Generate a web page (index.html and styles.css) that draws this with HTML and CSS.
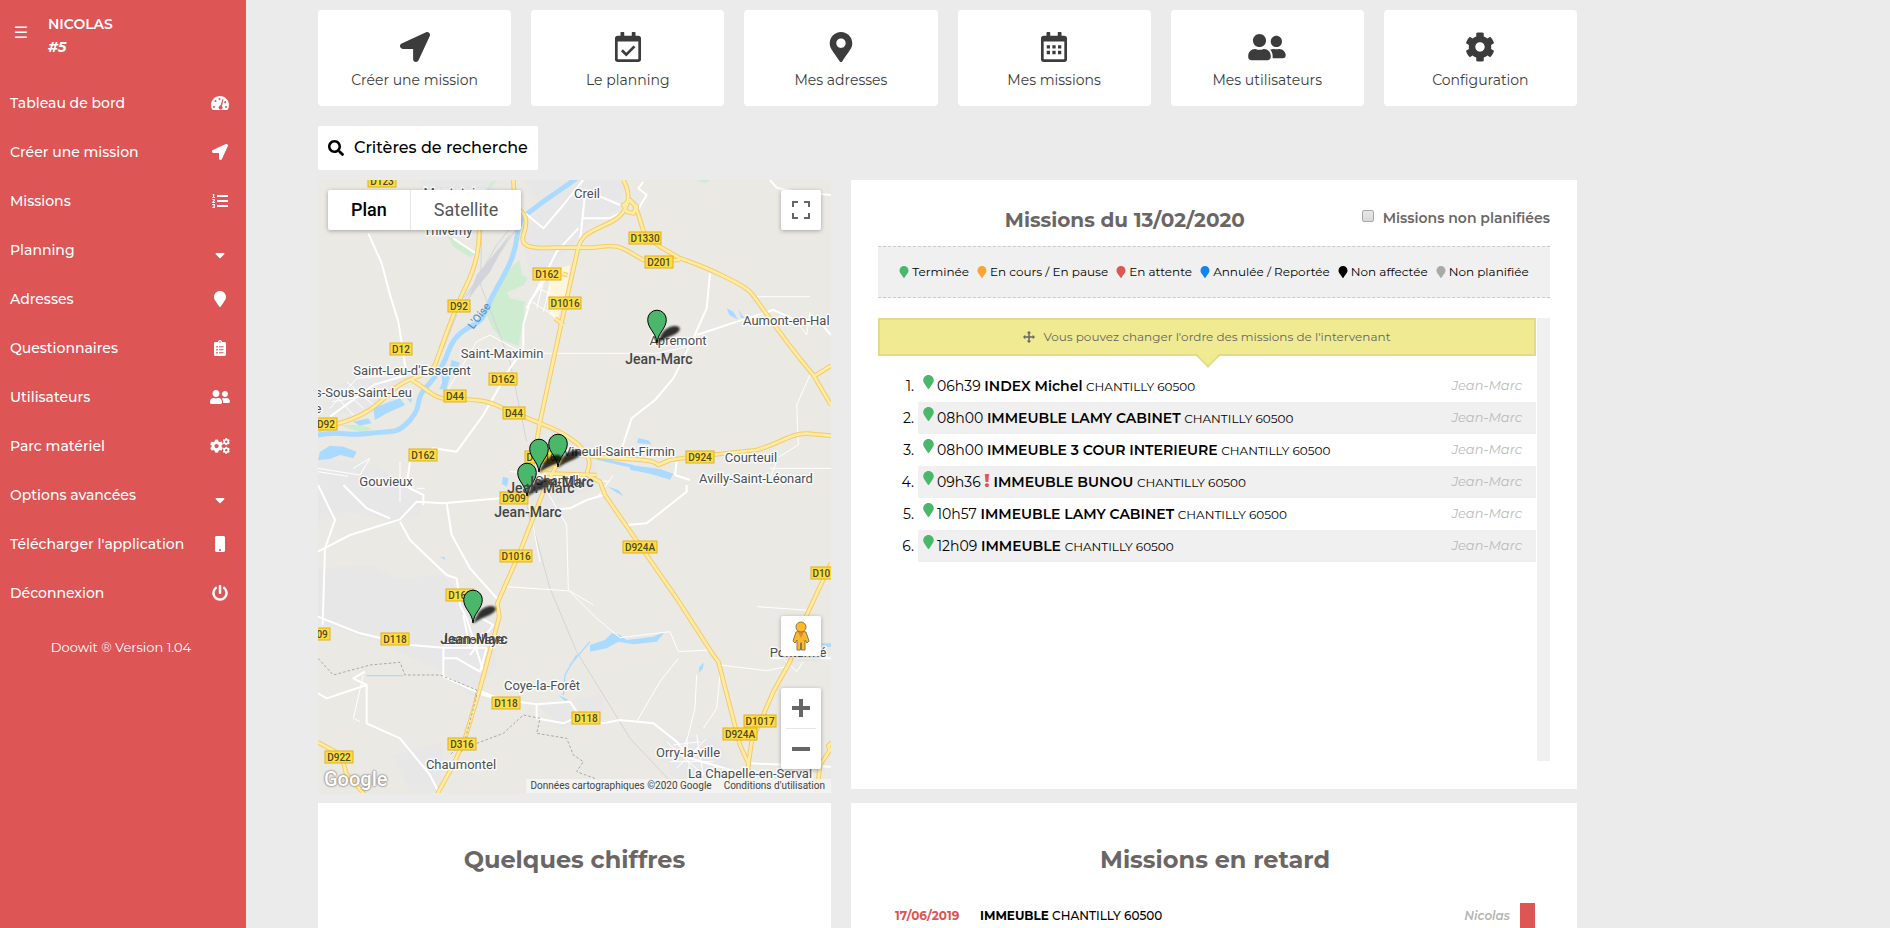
FILE: index.html
```html
<!DOCTYPE html>
<html lang="fr">
<head>
<meta charset="utf-8">
<title>Doowit - Tableau de bord</title>
<link rel="stylesheet" href="styles.css">
</head>
<body>
<svg class="sprite" aria-hidden="true">
  <symbol id="i-arrow" viewBox="0 0 512 512"><path d="M444.52 3.52L28.74 195.42c-47.97 22.39-31.98 92.75 19.19 92.75h175.91v175.91c0 51.17 70.36 67.17 92.75 19.19l191.9-415.78c15.99-38.39-25.59-79.97-63.97-63.97z"/></symbol>
  <symbol id="i-pin" viewBox="0 0 384 512"><path d="M172.268 501.67C26.97 291.031 0 269.413 0 192 0 85.961 85.961 0 192 0s192 85.961 192 192c0 77.413-26.97 99.031-172.268 309.67-9.535 13.774-29.93 13.773-39.464 0z"/></symbol>
  <symbol id="i-pin-alt" viewBox="0 0 384 512"><path d="M172.268 501.67C26.97 291.031 0 269.413 0 192 0 85.961 85.961 0 192 0s192 85.961 192 192c0 77.413-26.97 99.031-172.268 309.67-9.535 13.774-29.93 13.773-39.464 0zM192 272c44.183 0 80-35.817 80-80s-35.817-80-80-80-80 35.817-80 80 35.817 80 80 80z"/></symbol>
  <symbol id="i-sort" viewBox="0 0 320 512"><path d="M41 288h238c21.4 0 32.1 25.9 17 41L177 448c-9.4 9.4-24.6 9.4-33.9 0L24 329c-15.1-15.1-4.4-41 17-41z"/></symbol>
  <symbol id="i-users" viewBox="0 0 640 512"><path d="M192 256c61.9 0 112-50.1 112-112S253.9 32 192 32 80 82.1 80 144s50.1 112 112 112zm76.8 32h-8.3c-20.8 10-43.9 16-68.5 16s-47.6-6-68.5-16h-8.3C51.6 288 0 339.6 0 403.2V432c0 26.5 21.5 48 48 48h288c26.5 0 48-21.5 48-48v-28.8c0-63.6-51.6-115.2-115.2-115.2zM480 256c53 0 96-43 96-96s-43-96-96-96-96 43-96 96 43 96 96 96zm48 32h-3.8c-13.9 4.8-28.6 8-44.2 8s-30.3-3.2-44.2-8H432c-20.4 0-39.2 5.9-55.7 15.4 24.4 26.3 39.7 61.2 39.7 99.8v38.4c0 2.2-.5 4.3-.6 6.4H592c26.5 0 48-21.5 48-48 0-61.9-50.1-112-112-112z"/></symbol>
  <symbol id="i-cog" viewBox="0 0 512 512"><path d="M487.4 315.7l-42.6-24.6c4.3-23.2 4.3-47 0-70.2l42.6-24.6c4.9-2.8 7.1-8.6 5.5-14-11.1-35.6-30-67.8-54.7-94.6-3.8-4.1-10-5.1-14.8-2.3L380.8 110c-17.9-15.4-38.5-27.3-60.8-35.1V25.8c0-5.6-3.9-10.5-9.4-11.7-36.7-8.2-74.3-7.8-109.2 0-5.5 1.2-9.4 6.1-9.4 11.7V75c-22.2 7.9-42.8 19.8-60.8 35.1L88.7 85.5c-4.9-2.8-11-1.9-14.8 2.3-24.7 26.7-43.6 58.9-54.7 94.6-1.7 5.4.6 11.2 5.5 14L67.3 221c-4.3 23.2-4.3 47 0 70.2l-42.6 24.6c-4.9 2.8-7.1 8.6-5.5 14 11.1 35.6 30 67.8 54.7 94.6 3.8 4.1 10 5.1 14.8 2.3l42.6-24.6c17.9 15.4 38.5 27.3 60.8 35.1v49.2c0 5.6 3.9 10.5 9.4 11.7 36.7 8.2 74.3 7.8 109.2 0 5.5-1.2 9.4-6.1 9.4-11.7v-49.2c22.2-7.9 42.8-19.8 60.8-35.1l42.6 24.6c4.9 2.8 11 1.9 14.8-2.3 24.7-26.7 43.6-58.9 54.7-94.6 1.5-5.5-.7-11.3-5.6-14.1zM256 336c-44.1 0-80-35.9-80-80s35.9-80 80-80 80 35.9 80 80-35.9 80-80 80z"/></symbol>
  <symbol id="i-cogs" viewBox="0 0 640 512"><use href="#i-cog" x="-8" y="40" width="436" height="436"/><use href="#i-cog" x="400" y="0" width="240" height="240"/><use href="#i-cog" x="400" y="272" width="240" height="240"/></symbol>
  <symbol id="i-search" viewBox="0 0 512 512"><path d="M505 442.7L405.3 343c-4.5-4.5-10.6-7-17-7H372c27.6-35.3 44-79.7 44-128C416 93.1 322.9 0 208 0S0 93.1 0 208s93.1 208 208 208c48.3 0 92.7-16.4 128-44v16.3c0 6.4 2.5 12.5 7 17l99.7 99.7c9.4 9.4 24.6 9.4 33.9 0l28.3-28.3c9.4-9.4 9.4-24.6.1-34zM208 336c-70.7 0-128-57.2-128-128 0-70.7 57.2-128 128-128 70.7 0 128 57.2 128 128 0 70.7-57.2 128-128 128z"/></symbol>
  <symbol id="i-power" viewBox="0 0 512 512"><path d="M400 54.1c63 45 104 118.6 104 201.9 0 136.8-110.8 247.7-247.5 248C120 504.3 8.2 393 8 256.4 7.9 173.1 48.9 99.3 111.8 54.2c11.7-8.3 28-4.8 35 7.7L162.6 90c5.9 10.5 3.1 23.8-6.6 31-41.5 30.8-68 79.6-68 134.9-.1 92.3 74.5 168.1 168 168.1 91.6 0 168.6-74.2 168-169.1-.3-51.8-24.7-101.8-68.1-134-9.7-7.2-12.4-20.5-6.5-30.9l15.8-28.1c7-12.4 23.2-16.1 34.8-7.8zM296 264V24c0-13.3-10.7-24-24-24h-32c-13.3 0-24 10.7-24 24v240c0 13.3 10.7 24 24 24h32c13.3 0 24-10.7 24-24z"/></symbol>
  <symbol id="i-mobile" viewBox="0 0 320 512"><path d="M272 0H48C21.5 0 0 21.5 0 48v416c0 26.5 21.5 48 48 48h224c26.5 0 48-21.5 48-48V48c0-26.5-21.5-48-48-48zM160 480c-17.7 0-32-14.3-32-32s14.3-32 32-32 32 14.3 32 32-14.3 32-32 32z"/></symbol>
  <symbol id="i-gauge" viewBox="0 0 576 512"><path fill-rule="evenodd" d="M288 32C129 32 0 161 0 320c0 53 14 102 39 145 6 9 16 15 27 15h444c11 0 21-6 27-15 25-43 39-92 39-145C576 161 447 32 288 32zM96 352a32 32 0 1 1 0 64 32 32 0 0 1 0-64zM144 160a32 32 0 1 1 0 64 32 32 0 0 1 0-64zM272 96a32 32 0 1 1 0 64 32 32 0 0 1 0-64zM372 122l28 10-50 222a64 64 0 1 1-46-16zM440 200a32 32 0 1 1 0 60 32 32 0 0 1 0-60zM480 352a32 32 0 1 1 0 64 32 32 0 0 1 0-64z"/></symbol>
  <symbol id="i-list" viewBox="0 0 512 512"><path d="M176 64h320a16 16 0 0 1 16 16v32a16 16 0 0 1-16 16H176a16 16 0 0 1-16-16V80a16 16 0 0 1 16-16zM176 224h320a16 16 0 0 1 16 16v32a16 16 0 0 1-16 16H176a16 16 0 0 1-16-16v-32a16 16 0 0 1 16-16zM176 384h320a16 16 0 0 1 16 16v32a16 16 0 0 1-16 16H176a16 16 0 0 1-16-16v-32a16 16 0 0 1 16-16zM24 32h48v96h24v32H8v-32h24V64H16zM8 192h84v58l-40 38h44v32H4v-36l52-48v-14H8zM8 352h86v44l-18 20 18 20v44H8v-30h50v-20H28v-26h30v-22H8z"/></symbol>
  <symbol id="i-clipboard" viewBox="0 0 384 512"><path fill-rule="evenodd" d="M336 64h-80c0-35-29-64-64-64s-64 29-64 64H48C22 64 0 86 0 112v352c0 26 22 48 48 48h288c26 0 48-22 48-48V112c0-26-22-48-48-48zM192 40a24 24 0 1 1 0 48 24 24 0 0 1 0-48zM72 192h48v48H72zM160 200h144v32H160zM72 288h48v48H72zM160 296h144v32H160zM72 384h48v48H72zM160 392h144v32H160z"/></symbol>
  <symbol id="i-cal" viewBox="0 0 448 512"><path d="M400 64h-48V12c0-6.600-5.400-12-12-12h-40c-6.600 0-12 5.400-12 12v52H160V12c0-6.600-5.400-12-12-12h-40c-6.600 0-12 5.400-12 12v52H48C21.500 64 0 85.500 0 112v352c0 26.500 21.500 48 48 48h352c26.500 0 48-21.500 48-48V112c0-26.500-21.500-48-48-48zm-6 400H54c-3.300 0-6-2.700-6-6V160h352v298c0 3.300-2.700 6-6 6z"/></symbol>
  <symbol id="i-move" viewBox="0 0 512 512"><path d="M256 0l96 96h-64v128h128v-64l96 96-96 96v-64H288v128h64l-96 96-96-96h64V288H96v64L0 256l96-96v64h128V96h-64z"/></symbol>
  <symbol id="m-pin" viewBox="-12 -36 40 40" overflow="visible"><path class="pin-shadow" d="M0 0C3-7 5-13 11-16c8-4 14-1 11 3C18-8 8-7 0 0z"/><path class="pin-body" d="M0-1C-1-12-9.300-15-9.300-24.500a9.300 9.300 0 0 1 18.600 0C9.300-15 1-12 0-1z"/></symbol>
</svg>

<div class="app">
  <aside class="sidebar">
    <header class="user">
      <button class="burger" type="button" aria-label="Menu">☰</button>
      <div><strong class="user-name">NICOLAS</strong><em class="user-id">#5</em></div>
    </header>
    <nav class="menu">
      <a href="#">Tableau de bord<span class="ic"><svg class="w18"><use href="#i-gauge"/></svg></span></a>
      <a href="#">Créer une mission<span class="ic"><svg><use href="#i-arrow"/></svg></span></a>
      <a href="#">Missions<span class="ic"><svg><use href="#i-list"/></svg></span></a>
      <a href="#">Planning<span class="ic sort"><svg><use href="#i-sort"/></svg></span></a>
      <a href="#">Adresses<span class="ic"><svg><use href="#i-pin"/></svg></span></a>
      <a href="#">Questionnaires<span class="ic"><svg><use href="#i-clipboard"/></svg></span></a>
      <a href="#">Utilisateurs<span class="ic"><svg class="w20"><use href="#i-users"/></svg></span></a>
      <a href="#">Parc matériel<span class="ic"><svg class="w20"><use href="#i-cogs"/></svg></span></a>
      <a href="#">Options avancées<span class="ic sort"><svg><use href="#i-sort"/></svg></span></a>
      <a href="#">Télécharger l'application<span class="ic"><svg><use href="#i-mobile"/></svg></span></a>
      <a href="#">Déconnexion<span class="ic"><svg><use href="#i-power"/></svg></span></a>
    </nav>
    <p class="version">Doowit ® Version 1.04</p>
  </aside>

  <main class="content">
    <nav class="tiles">
      <a class="tile" href="#"><svg><use href="#i-arrow"/></svg>Créer une mission</a>
      <a class="tile" href="#"><svg viewBox="0 0 448 512"><use href="#i-cal"/><path class="check" d="M120 312l74 74 140-140"/></svg>Le planning</a>
      <a class="tile" href="#"><svg><use href="#i-pin-alt"/></svg>Mes adresses</a>
      <a class="tile" href="#"><svg viewBox="0 0 448 512"><use href="#i-cal"/><path d="M100 226h56v56h-56zM196 226h56v56h-56zM292 226h56v56h-56zM100 322h56v56h-56zM196 322h56v56h-56zM292 322h56v56h-56z"/></svg>Mes missions</a>
      <a class="tile" href="#"><svg class="wide"><use href="#i-users"/></svg>Mes utilisateurs</a>
      <a class="tile" href="#"><svg><use href="#i-cog"/></svg>Configuration</a>
    </nav>

    <button class="criteria" type="button"><svg><use href="#i-search"/></svg>Critères de recherche</button>

    <div class="board">
      <section class="map" aria-label="Carte">
        <svg class="map-canvas" viewBox="0 0 513 613" preserveAspectRatio="xMidYMid slice">
          <g transform="translate(-8 -5) scale(.33333)">
            <g class="urban">
              <path d="M640 15H950L930 100 830 150 780 220 700 290 660 300 640 200 690 90z"/>
              <path d="M24 1180L180 1170 260 1210 400 1200 470 1270 560 1330 560 1480 480 1560 400 1490 200 1400 24 1340z"/>
              <path d="M24 850L200 870 270 930 340 960 330 1020 250 1040 120 1010 24 1040z"/>
              <path d="M60 640L180 590 300 600 230 700 60 720z"/>
              <path d="M330 15H560L520 160 400 190 330 100z"/>
              <path d="M690 790L850 800 860 930 720 1000 640 960z"/>
              <path d="M1060 1680L1220 1690 1280 1800 1200 1850 1080 1800z"/>
              <path d="M680 1590L880 1560 880 1640 760 1660z"/>
              <path d="M250 1740L400 1700 390 1850 300 1850z"/>
            </g>
            <path class="commerce" d="M720 290L780 270 770 350 740 440 710 400z"/>
            <g class="green">
              <path d="M628 255L636 300 652 308 642 330 590 352 600 370 645 380 640 440 625 512 580 495 548 460 530 420 550 360 580 300z"/>
              <path d="M412 182L500 235 480 246 430 215zM90 750L150 750 185 760 160 775zM540 40L560 15 545 20 530 45zM1160 15h40l-15 10z"/>
            </g>
            <g class="rail">
              <path d="M470 380L620 160M450 400L560 210 640 110M460 370L600 180M515 160L512 330 600 560 650 800M660 1020L720 1240 800 1430 880 1560 960 1690 1110 1850M640 930L660 1040M400 520L440 420"/>
              <path class="yard" d="M475 370L500 300 600 180 540 290z"/>
            </g>
            <g class="river">
              <path d="M800 10C760 40 710 70 680 95S630 120 622 180 600 270 560 340 530 430 490 450 430 490 415 530 390 590 350 635 340 690 300 735 250 765 180 775 90 765 24 780"/>
            </g>
            <g class="water">
              <path d="M190 700L240 680 270 670 285 690 230 715 195 735zM290 670l18-5-5 18zM130 740L175 730 185 745 150 752zM30 830L60 812 100 815 140 830 130 850 90 840 60 852 24 855zM395 590l15-12 10 25-10 40-22 0 8-20zM425 555l25 8-10 20-20-5zM578 905l18 5-5 25-15-8zM390 1145l14 2 2 8zM1250 400l20 10 14 24-26-14zM1285 402l12 20 10 8-14-2zM960 870l90 12 40 14-10 18-60-18-60-12zM860 845l110 25 0 10-110-26zM985 790l30 6 10 12-44-4z"/>
              <path d="M840 1410L885 1395 905 1375 930 1380 950 1395 1030 1385 1065 1370 1040 1400 970 1408 925 1400 890 1420 840 1430zM1168 1475l14-12-4 18-12 12zM745 1560l30 14-10 4zM1535 1405l28 0 0 10-24 2zM895 935l30 10 15 18-20-10z"/>
              <path class="stream" d="M170 1502h110M800 1440l-35 60-5 60M780 1470l60-70M24 1508"/>
            </g>
            <g class="minor">
              <path d="M60 700L140 610 250 600M75 660L130 720M95 640L160 700M110 620L190 690M65 680l130-20M24 880L150 900 180 850 130 880"/>
              <path d="M270 860v120M24 890l90 14M780 535H640L540 480 500 500 410 650M345 940H320"/>
              <path d="M680 340L760 370M665 380L745 430M700 320L680 400M720 330L700 410M740 360L720 420"/>
              <path d="M780 535H1040L1180 505M1500 600L1460 690 1465 810 1400 850M1340 365H1500M1340 1295L1500 1306M700 930L770 1050 775 1245M590 1235L780 1248 850 1290M650 950l40 210"/>
              <path d="M780 1250L860 1330 930 1388 1080 1370 1105 1430 1200 1425M1105 1450L1050 1520 980 1640M1230 1470L1370 1487 1430 1475M1230 1500L1220 1600 1180 1660M1160 1500l-5 100-20 80-20 60"/>
              <path d="M1070 1700L1180 1800M1080 1740L1200 1720M1100 1780L1190 1690M1130 1690l10 110M1160 1680l20 120M1090 1710l80-10M1080 1760l130 0M1380 880h200M1400 860l-20 50M1420 1450l40 40 20-30M160 1500l-30 130 20 10M690 900L900 920M860 970l50-70M600 890L820 900M1460 440L1490 480 1500 410"/>
            </g>
            <g class="minor bold">
              <path d="M175 175L215 265 240 360 265 440 290 600M430 190L497 235"/>
              <path d="M820 15L760 90 700 160 640 110M720 290L660 380 640 450 640 520 600 580 520 720 440 830 370 820 300 860 290 930"/>
              <path d="M290 600L190 630 60 725M805 160L740 230 710 290 650 400"/>
              <path d="M1380 15L1400 38 1460 50 1563 60M860 60L930 90M820 130L900 130 940 110M810 200L825 60M980 110L1010 60 985 40 1000 20"/>
              <path d="M1200 295L1190 400 1150 490 1090 610 1035 675 965 730 935 820M1160 480L1290 437 1390 405 1470 440 1520 430 1563 480"/>
              <path d="M24 1130L120 1080 270 1033 320 980 400 985 570 970 650 965M270 1040L300 1095 410 1200 440 1210 450 1290 470 1330 520 1490"/>
              <path d="M24 930L75 1035 45 1120 38 1350M410 985L425 1080 480 1180 565 1275M24 1325L150 1375 300 1410 400 1418 530 1418M400 1418V1505L520 1560 580 1575"/>
              <path d="M400 1450L440 1450 510 1490 530 1420M460 1320L480 1420M480 1310L550 1350 480 1440M24 1555L50 1570 170 1530V1645L270 1690 360 1800 385 1850M170 1530l-40-20 35-20"/>
              <path d="M100 930L170 1000 240 1030M280 930L340 960V990M650 1010L780 1000 830 975 880 960M950 1050L1010 1045 1130 950 1130 930"/>
              <path d="M500 1545L580 1575 680 1588 780 1580 810 1625 880 1645 930 1635 1030 1645 1100 1700 1140 1750 1280 1790M680 1590V1630L760 1645 840 1610M1320 1765L1563 1775M1380 1450H1563M1100 860L1095 900 1140 915"/>
            </g>
            <path class="border" d="M24 1450L70 1500 180 1470 270 1462 285 1500 390 1500 500 1545 480 1640 460 1700 420 1740M500 1705L580 1675 640 1620 690 1630 680 1675 770 1690 790 1740 820 1760 800 1790 880 1820"/>
            <g class="road-edge">
              <path id="r1" d="M507 165C510 220 495 280 465 340S400 500 375 570C350 610 300 600 255 640S180 720 80 747L24 765"/>
              <path id="r2" d="M610 15L615 100C650 110 655 140 640 180 630 215 660 222 740 218H850C930 205 930 215 1000 255L1110 255"/>
              <path id="r3" d="M940 15C965 60 960 110 905 140S815 170 803 225L755 440 690 740 670 860 645 940"/>
              <path id="r4" d="M955 75C985 90 985 130 1005 180L1050 215 1110 250C1200 280 1300 330 1320 350S1400 470 1510 600L1563 690M1510 605L1563 572"/>
              <path id="r5" d="M300 612C350 640 370 670 410 672S500 670 540 683L690 745C760 770 820 810 835 850S800 890 870 920L885 960 1100 1270 1210 1440 1225 1460 1290 1710 1315 1765V1860"/>
              <path id="r6" d="M690 890L800 840 930 850C1000 855 1030 855 1045 870L1080 855C1150 845 1250 835 1340 825 1400 810 1440 775 1490 776L1563 782"/>
              <path id="r7" d="M760 830L700 950 630 1130 562 1285 568 1325 510 1540 465 1690 430 1770 380 1860"/>
              <path id="r8" d="M1563 1165L1490 1320 1440 1460 1390 1550 1325 1700 1315 1770"/>
              <path id="r9" d="M24 1702L95 1740 108 1795 165 1860M1570 1700L1555 1712 1560 1725 1530 1770 1520 1860M700 895L860 900"/>
              <path id="r10" d="M735 430l25 20M940 90l20-15 20 20-10 20-20-5zM758 296l15 5"/>
            </g>
            <g class="road-fill">
              <use href="#r1"/><use href="#r2"/><use href="#r3"/><use href="#r4"/><use href="#r5"/><use href="#r6"/><use href="#r7"/><use href="#r8"/><use href="#r9"/><use href="#r10"/>
            </g>
            <path class="border" d="M500 1560L480 1640 455 1730"/>
          </g>

          <g class="badge">
            <g transform="translate(64 1)"><rect x="-14" y="-6" width="28" height="12"/><text y="4">D123</text></g>
            <g transform="translate(229 94)"><rect x="-14" y="-6" width="28" height="12"/><text y="4">D162</text></g>
            <g transform="translate(141 126)"><rect x="-11" y="-6" width="22" height="12"/><text y="4">D92</text></g>
            <g transform="translate(247 123)"><rect x="-16" y="-6" width="32" height="12"/><text y="4">D1016</text></g>
            <g transform="translate(83 169)"><rect x="-11" y="-6" width="22" height="12"/><text y="4">D12</text></g>
            <g transform="translate(185 199)"><rect x="-14" y="-6" width="28" height="12"/><text y="4">D162</text></g>
            <g transform="translate(137 216)"><rect x="-11" y="-6" width="22" height="12"/><text y="4">D44</text></g>
            <g transform="translate(196 233)"><rect x="-11" y="-6" width="22" height="12"/><text y="4">D44</text></g>
            <g transform="translate(8 244)"><rect x="-11" y="-6" width="22" height="12"/><text y="4">D92</text></g>
            <g transform="translate(105 275)"><rect x="-14" y="-6" width="28" height="12"/><text y="4">D162</text></g>
            <g transform="translate(223 277)"><rect x="-16" y="-6" width="32" height="12"/><text y="4">D1016</text></g>
            <g transform="translate(327 58)"><rect x="-16" y="-6" width="32" height="12"/><text y="4">D1330</text></g>
            <g transform="translate(341 82)"><rect x="-14" y="-6" width="28" height="12"/><text y="4">D201</text></g>
            <g transform="translate(382 277)"><rect x="-14" y="-6" width="28" height="12"/><text y="4">D924</text></g>
            <g transform="translate(196 318)"><rect x="-14" y="-6" width="28" height="12"/><text y="4">D909</text></g>
            <g transform="translate(198 376)"><rect x="-16" y="-6" width="32" height="12"/><text y="4">D1016</text></g>
            <g transform="translate(142 415)"><rect x="-14" y="-6" width="28" height="12"/><text y="4">D162</text></g>
            <g transform="translate(77 459)"><rect x="-14" y="-6" width="28" height="12"/><text y="4">D118</text></g>
            <g transform="translate(-2 454)"><rect x="-14" y="-6" width="28" height="12"/><text y="4">D909</text></g>
            <g transform="translate(188 523)"><rect x="-14" y="-6" width="28" height="12"/><text y="4">D118</text></g>
            <g transform="translate(268 538)"><rect x="-14" y="-6" width="28" height="12"/><text y="4">D118</text></g>
            <g transform="translate(144 564)"><rect x="-14" y="-6" width="28" height="12"/><text y="4">D316</text></g>
            <g transform="translate(21 577)"><rect x="-14" y="-6" width="28" height="12"/><text y="4">D922</text></g>
            <g transform="translate(322 367)"><rect x="-17" y="-6" width="34" height="12"/><text y="4">D924A</text></g>
            <g transform="translate(509 393)"><rect x="-16" y="-6" width="32" height="12"/><text y="4">D1017</text></g>
            <g transform="translate(442 541)"><rect x="-16" y="-6" width="32" height="12"/><text y="4">D1017</text></g>
            <g transform="translate(422 554)"><rect x="-17" y="-6" width="34" height="12"/><text y="4">D924A</text></g>
          </g>

          <g class="town">
            <text x="269" y="18">Creil</text>
            <text x="137" y="17">Montataire</text>
            <text x="130" y="55">Thiverny</text>
            <text x="184" y="178">Saint-Maximin</text>
            <text x="94" y="195">Saint-Leu-d'Esserent</text>
            <text class="end" x="94" y="217">s-Sous-Saint-Leu</text>
            <text x="0" y="233">e</text>
            <text x="68" y="306">Gouvieux</text>
            <text x="360" y="165">Apremont</text>
            <text class="start" x="425" y="145">Aumont-en-Hal</text>
            <text class="end" x="357" y="276">Vineuil-Saint-Firmin</text>
            <text x="433" y="282">Courteuil</text>
            <text x="438" y="303">Avilly-Saint-Léonard</text>
            <text x="242" y="305">Chantilly</text>
            <text x="156" y="464">Lamorlaye</text>
            <text x="224" y="510">Coye-la-Forêt</text>
            <text x="143" y="589">Chaumontel</text>
            <text x="370" y="577">Orry-la-ville</text>
            <text x="432" y="598">La Chapelle-en-Serval</text>
            <text x="480" y="477">Pontarmé</text>
            <text class="stream-name" transform="translate(164 138) rotate(-52)">L'Oise</text>
          </g>

          <g>
            <use href="#m-pin" x="327" y="128" width="40" height="40"/>
            <use href="#m-pin" x="228" y="252" width="40" height="40"/>
            <use href="#m-pin" x="209" y="257" width="40" height="40"/>
            <use href="#m-pin" x="197" y="281" width="40" height="40"/>
            <use href="#m-pin" x="143" y="408" width="40" height="40"/>
          </g>
          <g class="agent">
            <text x="341" y="184">Jean-Marc</text>
            <text x="242" y="307">Jean-Marc</text>
            <text x="223" y="313">Jean-Marc</text>
            <text x="210" y="337">Jean-Marc</text>
            <text x="156" y="464">Jean-Marc</text>
          </g>
        </svg>

        <div class="map-type"><button class="on" type="button">Plan</button><button type="button">Satellite</button></div>
        <button class="map-btn full" type="button" aria-label="Plein écran"><svg viewBox="0 0 18 18"><path d="M0 0h6v2H2v4H0zM12 0h6v6h-2V2h-4zM0 12h2v4h4v2H0zM16 12h2v6h-6v-2h4z"/></svg></button>
        <button class="map-btn pegman" type="button" aria-label="Street View"><svg viewBox="0 0 18 30"><path class="peg" d="M4 11q5-2 10 0l3 9-2 2-2-3v10H9.500v-7h-1v7H5V19l-2 3-2-2z"/><path class="peg-v" d="M6 11h6l-3 6z"/><circle class="peg" cx="9" cy="6" r="5"/></svg></button>
        <div class="map-zoom"><button type="button" aria-label="Zoom avant"><svg viewBox="0 0 18 18"><path d="M7 0h4v7h7v4h-7v7H7v-7H0V7h7z"/></svg></button><button type="button" aria-label="Zoom arrière"><svg viewBox="0 0 18 18"><path d="M0 7h18v4H0z"/></svg></button></div>
        <span class="google">Google</span>
        <div class="credits"><span>Données cartographiques ©2020 Google</span><a href="#">Conditions d'utilisation</a></div>
      </section>

      <section class="panel missions">
        <header class="missions-head">
          <h2>Missions du 13/02/2020</h2>
          <label class="unplanned" for="unplanned"><input id="unplanned" type="checkbox">Missions non planifiées</label>
        </header>
        <ul class="legend">
          <li><svg class="c-green"><use href="#i-pin"/></svg>Terminée</li>
          <li><svg class="c-orange"><use href="#i-pin"/></svg>En cours / En pause</li>
          <li><svg class="c-red"><use href="#i-pin"/></svg>En attente</li>
          <li><svg class="c-blue"><use href="#i-pin"/></svg>Annulée / Reportée</li>
          <li><svg class="c-black"><use href="#i-pin"/></svg>Non affectée</li>
          <li><svg class="c-grey"><use href="#i-pin"/></svg>Non planifiée</li>
        </ul>
        <div class="scroller">
          <div class="scroll-body">
            <p class="hint"><svg><use href="#i-move"/></svg>Vous pouvez changer l'ordre des missions de l'intervenant</p>
            <ol class="list">
              <li><span class="num">1.</span><div class="row"><svg><use href="#i-pin"/></svg><span class="what">06h39 <b>INDEX Michel</b> <small>CHANTILLY 60500</small></span><em>Jean-Marc</em></div></li>
              <li><span class="num">2.</span><div class="row"><svg><use href="#i-pin"/></svg><span class="what">08h00 <b>IMMEUBLE LAMY CABINET</b> <small>CHANTILLY 60500</small></span><em>Jean-Marc</em></div></li>
              <li><span class="num">3.</span><div class="row"><svg><use href="#i-pin"/></svg><span class="what">08h00 <b>IMMEUBLE 3 COUR INTERIEURE</b> <small>CHANTILLY 60500</small></span><em>Jean-Marc</em></div></li>
              <li><span class="num">4.</span><div class="row"><svg><use href="#i-pin"/></svg><span class="what">09h36 <b class="alert">!</b> <b>IMMEUBLE BUNOU</b> <small>CHANTILLY 60500</small></span><em>Jean-Marc</em></div></li>
              <li><span class="num">5.</span><div class="row"><svg><use href="#i-pin"/></svg><span class="what">10h57 <b>IMMEUBLE LAMY CABINET</b> <small>CHANTILLY 60500</small></span><em>Jean-Marc</em></div></li>
              <li><span class="num">6.</span><div class="row"><svg><use href="#i-pin"/></svg><span class="what">12h09 <b>IMMEUBLE</b> <small>CHANTILLY 60500</small></span><em>Jean-Marc</em></div></li>
            </ol>
          </div>
          <div class="track"></div>
        </div>
      </section>
    </div>

    <div class="board lower">
      <section class="panel stats"><h2>Quelques chiffres</h2></section>
      <section class="panel late">
        <h2>Missions en retard</h2>
        <a class="late-row" href="#"><time datetime="2019-06-17">17/06/2019</time><span class="late-what"><b>IMMEUBLE</b> CHANTILLY 60500</span><em>Nicolas</em><i class="bar"></i></a>
      </section>
    </div>
  </main>
</div>
</body>
</html>
```

FILE: styles.css
```css
* { box-sizing: border-box; }
body { margin: 0; background: #ebebeb; color: #000; font: 14px/20px Montserrat, Inter, sans-serif; }
h2, p, ul, ol { margin: 0; padding: 0; font-weight: inherit; }
ul, ol { list-style: none; }
a { color: inherit; text-decoration: none; }
button { font: inherit; border: 0; cursor: pointer; }
svg { display: block; fill: currentColor; flex: none; }
.sprite { position: absolute; width: 0; height: 0; }

.app { display: flex; height: 100vh; overflow: hidden; }

/* Sidebar */
.sidebar { flex: 0 0 246px; background: #dd5555; color: #fff; }
.user { display: flex; align-items: flex-start; gap: 18px; padding: 12px 12px 0; height: 78px; font-weight: 600; }
.burger { width: 18px; height: 42px; padding: 0; background: none; color: #fff; font-family: "DejaVu Sans", sans-serif; font-size: 16px; text-align: center; }
.user-name, .user-id { display: block; line-height: 24px; font-weight: 600; }
.user-id { line-height: 22px; font-weight: 700; }
.menu a { display: flex; align-items: center; justify-content: space-between; height: 49px; padding: 0 16px 0 10px; font-weight: 500; }
.ic { display: flex; justify-content: center; width: 20px; }
.ic svg { width: 16px; height: 16px; }
.ic .w18 { width: 18px; }
.ic .w20 { width: 20px; }
.sort { padding-top: 5px; }
.version { padding: 20px 4px 0 0; text-align: center; font-size: 13px; }

/* Main column */
.content { flex: 1; display: flex; flex-direction: column; align-items: flex-start; max-width: 1331px; padding: 10px 0 0 72px; }
.content > * { flex-shrink: 0; }
.tiles { display: grid; grid-template-columns: repeat(6, 1fr); gap: 20px; width: 100%; }
.tile { display: flex; flex-direction: column; align-items: center; gap: 7px; height: 96px; padding-top: 22px; border-radius: 4px; background: #fff; color: #3c3c3c; line-height: 22px; }
.tile svg { width: 30px; height: 30px; }
.tile .wide { width: 38px; }
.check { fill: none; stroke: currentColor; stroke-width: 46px; }
.criteria { display: flex; align-items: center; gap: 10px; height: 44px; margin: 20px 0 10px; padding: 0 10px; border-radius: 2px; background: #fff; color: #000; font-size: 16px; font-weight: 500; }
.criteria svg { width: 16px; height: 16px; }
.board { display: grid; grid-template-columns: 513fr 726fr; gap: 20px; width: 100%; align-items: start; }
.lower { flex: 1; align-items: stretch; margin-top: 10px; }
.panel { background: #fff; }

/* Map */
.map { position: relative; height: 613px; overflow: hidden; background: #eae9e4; font-family: Roboto, sans-serif; }
.map-canvas { width: 100%; height: 100%; }
.map-canvas path { fill: none; }
.map-canvas .urban path { fill: #e7e7e7; }
.map-canvas .commerce { fill: #fdf6dd; }
.map-canvas .green path { fill: #cdecd0; }
.map-canvas .water path { fill: #aadaff; }
.map-canvas .water .stream { fill: none; stroke: #aadaff; stroke-width: 4px; }
.river path { stroke: #aadaff; stroke-width: 15px; }
.rail path { stroke: #d2d4d9; stroke-width: 3px; }
.map-canvas .rail .yard { fill: #d2d4d9; stroke: none; }
.minor path { stroke: #fff; stroke-width: 3px; stroke-linejoin: round; }
.minor.bold path { stroke-width: 6px; }
.map-canvas .border { stroke: #a9a9a9; stroke-width: 3px; stroke-dasharray: 8 6; }
.road-edge { stroke: #f3cb6b; stroke-width: 14px; stroke-linejoin: round; }
.road-fill { stroke: #ffeba1; stroke-width: 8px; stroke-linejoin: round; }
.road-fill use { stroke: #ffeba1; }
.badge rect { fill: #ffdd3c; stroke: #dfae25; stroke-width: 1px; }
.badge text { font-size: 10px; font-weight: 500; fill: #4b4a2e; text-anchor: middle; }
.town text { font-size: 13px; fill: #4b5056; stroke: #fff; stroke-width: 3px; stroke-linejoin: round; stroke-opacity: .8; paint-order: stroke; text-anchor: middle; }
.town .start { text-anchor: start; }
.town .end { text-anchor: end; }
.town .stream-name { font-size: 11px; fill: #4c83c3; stroke: none; }
.agent text { font-size: 14px; font-weight: 500; fill: #444; text-anchor: middle; }
.pin-body { fill: #4bb76a; stroke: #000; stroke-width: 1px; }
.pin-shadow { fill: #000; opacity: .8; filter: blur(1px); }
.map-canvas .pin-body, .pin-body { fill: #4bb76a; }

.map-type { position: absolute; top: 10px; left: 10px; display: flex; height: 40px; background: #fff; border-radius: 2px; box-shadow: 0 1px 4px rgba(0, 0, 0, .3); font-size: 18px; }
.map-type button { padding: 0 23px; background: none; color: #565656; }
.map-type .on { color: #000; font-weight: 500; border-right: 1px solid #e6e6e6; }
.map-btn, .map-zoom { position: absolute; right: 10px; width: 40px; background: #fff; border-radius: 2px; box-shadow: 0 1px 4px rgba(0, 0, 0, .3); color: #666; }
.map-btn { display: grid; place-items: center; height: 40px; padding: 0; }
.full { top: 10px; }
.pegman { bottom: 137px; }
.map .full path, .map-zoom path { fill: #666; }
.full svg, .map-zoom svg { width: 18px; height: 18px; }
.pegman svg { width: 18px; height: 30px; }
.peg { fill: #fbb927; stroke: #8a7a4a; stroke-width: 1px; }
.peg-v { fill: #e6843c; }
.map-zoom { bottom: 24px; display: grid; padding: 0 5px; }
.map-zoom button { display: grid; place-items: center; height: 40px; padding: 0; background: none; }
.map-zoom button + button { height: 41px; border-top: 1px solid #e6e6e6; }
.google { position: absolute; left: 6px; bottom: 2px; color: #fff; font-size: 20px; font-weight: 500; line-height: 24px; text-shadow: 0 0 2px #777, 0 0 2px #777; }
.credits { position: absolute; right: 0; bottom: 0; display: flex; gap: 12px; padding: 0 6px 0 5px; background: rgba(245, 245, 245, .75); color: #444; font-size: 10px; line-height: 14px; }

/* Missions of the day */
.missions { padding: 20px 27px 28px; }
.missions-head { display: grid; grid-template-columns: 1fr auto; align-items: start; height: 46px; padding-left: 10px; color: #6b6666; }
.missions-head h2 { font-size: 20px; line-height: 40px; font-weight: 700; text-align: center; }
.unplanned { display: flex; align-items: center; gap: 9px; height: 36px; font-weight: 600; }
.unplanned input { appearance: none; width: 12px; height: 12px; margin: 0 0 4px; border: 1px solid #aaa; border-radius: 2px; background: linear-gradient(#e8e8e8, #d9d9d9); }
.legend { display: flex; justify-content: center; gap: 8px; padding: 15px 0; border: 1px dashed #ccc; border-width: 1px 0; background: #f0f0f0; font-size: 12px; }
.legend li { display: flex; align-items: center; gap: 3px; }
.legend svg { width: 10px; height: 12px; }
.c-green { color: #4bb76a; }
.c-orange { color: #f7a535; }
.c-red { color: #dd5555; }
.c-blue { color: #1285f5; }
.c-black { color: #000; }
.c-grey { color: #a9a9a9; }
.scroller { display: flex; gap: 1px; height: 443px; margin-top: 20px; }
.scroll-body { flex: 1; }
.track { width: 13px; background: #f0f0f0; }
.hint { position: relative; display: flex; align-items: center; justify-content: center; gap: 8px; height: 38px; border: 2px solid #e2dd85; background: #f0eb92; color: #666; font-size: 12px; }
.hint svg { width: 12px; height: 12px; }
.hint::after { content: ""; position: absolute; left: 50%; bottom: -10px; width: 16px; height: 16px; margin-left: -8px; border: solid #e2dd85; border-width: 0 2px 2px 0; background: linear-gradient(135deg, transparent 50%, #f0eb92 50%); transform: rotate(45deg); }
.list { padding-top: 14px; }
.list li { display: flex; height: 32px; line-height: 32px; }
.num { width: 36px; text-align: right; }
.row { flex: 1; display: flex; gap: 3px; margin-left: 4px; padding: 0 14px 0 5px; }
.list li:nth-child(even) .row { background: #f0f0f0; }
.row svg { width: 11px; height: 14px; margin-top: 5px; color: #4bb76a; }
.what { flex: 1; }
.what b { font-weight: 600; }
.what small { font-size: 12px; }
.what .alert { color: #dd5555; font-size: 18px; line-height: 20px; font-weight: 800; }
.row em { color: #bbb; font-size: 13px; line-height: 30px; }

/* Lower panels */
.lower h2 { padding-top: 37px; color: #6b6666; font-size: 24px; font-weight: 700; line-height: 40px; text-align: center; }
.late { padding: 0 42px 0 44px; }
.late-row { display: flex; align-items: center; margin-top: 23px; font-size: 12px; font-weight: 500; }
.late-row time { width: 85px; color: #dd5555; font-weight: 700; }
.late-what { flex: 1; }
.late-row em { color: #b5b5b5; font-weight: 600; margin-right: 10px; }
.bar { width: 15px; height: 26px; background: #dd5555; }
```
